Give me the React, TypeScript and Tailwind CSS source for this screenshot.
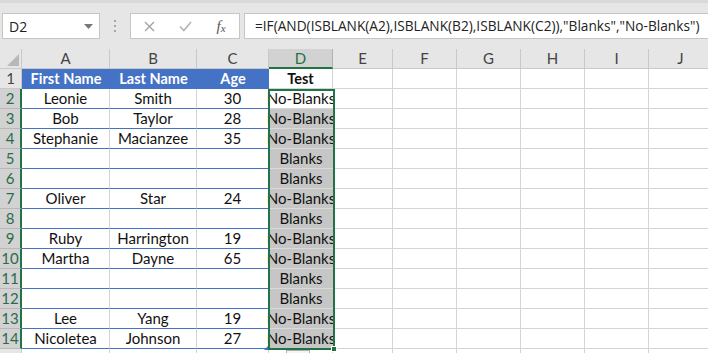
import React from "react";

const cols = ["A", "B", "C", "D", "E", "F", "G", "H", "I", "J"];

type Row = [string, string, string, string];
const data: Row[] = [
  ["Leonie", "Smith", "30", "No-Blanks"],
  ["Bob", "Taylor", "28", "No-Blanks"],
  ["Stephanie", "Macianzee", "35", "No-Blanks"],
  ["", "", "", "Blanks"],
  ["", "", "", "Blanks"],
  ["Oliver", "Star", "24", "No-Blanks"],
  ["", "", "", "Blanks"],
  ["Ruby", "Harrington", "19", "No-Blanks"],
  ["Martha", "Dayne", "65", "No-Blanks"],
  ["", "", "", "Blanks"],
  ["", "", "", "Blanks"],
  ["Lee", "Yang", "19", "No-Blanks"],
  ["Nicoletea", "Johnson", "27", "No-Blanks"],
];

const gridCols =
  "grid grid-cols-[22px_88px_87px_72px_64px_60px_64px_64px_64px_64px_64px]";

function CornerCell() {
  return (
    <div className="h-[20px] bg-[#e6e6e6] border-r border-b border-[#c9c9c9] flex items-end justify-end pr-[2px] pb-[2px]">
      <svg width="12" height="12" viewBox="0 0 12 12">
        <polygon points="12,0 12,12 0,12" fill="#b8b8b8" />
      </svg>
    </div>
  );
}

export default function App() {
  return (
    <div className="w-[708px] h-[353px] overflow-hidden bg-[#e6e6e6] font-['Lato',sans-serif] text-[#222]">
      {/* Formula bar */}
      <div className="h-[49px] border-t-[3px] border-[#d9d9d9] flex items-start pt-[10px] pl-[2px]">
        <div className="w-[101px] h-[26px] bg-white border border-[#c6c6c6] flex items-center justify-between pl-[6px] pr-[6px] font-['Open_Sans',sans-serif] text-[14px] text-[#222]">
          <span>D2</span>
          <svg width="9" height="5" viewBox="0 0 9 5">
            <polygon points="0,0 9,0 4.5,5" fill="#777" />
          </svg>
        </div>
        <div className="w-[31px] h-[26px] flex flex-col items-center justify-center gap-[3px]">
          <div className="w-[2px] h-[2px] bg-[#a8a8a8]" />
          <div className="w-[2px] h-[2px] bg-[#a8a8a8]" />
          <div className="w-[2px] h-[2px] bg-[#a8a8a8]" />
        </div>
        <div className="w-[110px] h-[26px] bg-white border border-[#c6c6c6] flex items-center">
          <div className="w-[36px] flex justify-center ml-[1px]">
            <svg width="11" height="11" viewBox="0 0 11 11">
              <path d="M1 1 L10 10 M10 1 L1 10" stroke="#a0a0a0" strokeWidth="1.3" />
            </svg>
          </div>
          <div className="w-[36px] flex justify-center">
            <svg width="13" height="11" viewBox="0 0 13 11">
              <path d="M1 5.5 L4.8 9.5 L12 1" stroke="#b4b4b4" strokeWidth="1.6" fill="none" />
            </svg>
          </div>
          <div className="w-[36px] flex justify-center font-['Liberation_Serif',serif] italic text-[15px] text-[#555] leading-none">
            <span>f</span>
            <span className="text-[11px] mt-[4px]">x</span>
          </div>
        </div>
        <div className="ml-[4px] w-[480px] h-[26px] bg-white border border-[#c6c6c6] border-r-0 flex items-center pl-[10px] font-['Open_Sans',sans-serif] text-[13.7px] text-[#222] whitespace-nowrap">
          =IF(AND(ISBLANK(A2),ISBLANK(B2),ISBLANK(C2)),"Blanks","No-Blanks")
        </div>
      </div>

      {/* Grid */}
      <div className="relative bg-white">
        {/* column headers */}
        <div className={gridCols}>
          <CornerCell />
          {cols.map((c) => (
            <div
              key={c}
              className={
                c === "D"
                  ? "h-[20px] bg-[#d2d2d2] border-r border-[#b0b0b0] border-b-2 border-b-[#217346] flex items-center justify-center text-[15px] text-[#217346]"
                  : "h-[20px] bg-[#e6e6e6] border-r border-b border-[#c9c9c9] flex items-center justify-center text-[15px] text-[#444]"
              }
            >
              {c}
            </div>
          ))}
        </div>

        {/* Row 1 */}
        <div className={gridCols}>
          <div className="h-[20px] bg-[#e6e6e6] border-r border-b border-[#c9c9c9] flex items-center justify-center text-[15px] text-[#444]">
            1
          </div>
          {["First Name", "Last Name", "Age"].map((t) => (
            <div
              key={t}
              className="h-[20px] bg-[#4472c4] flex items-center justify-center text-[14.5px] font-bold text-white whitespace-nowrap"
            >
              {t}
            </div>
          ))}
          <div className="h-[20px] bg-white border-r border-b border-[#d4d4d4] flex items-center justify-center text-[14.5px] font-bold text-[#111]">
            Test
          </div>
          {cols.slice(4).map((c) => (
            <div key={c} className="h-[20px] border-r border-b border-[#d4d4d4]" />
          ))}
        </div>

        {/* Data rows */}
        {data.map((r, i) => (
          <div key={i} className={gridCols}>
            <div className="h-[20px] bg-[#d2d2d2] border-r-2 border-r-[#217346] border-b border-b-[#b8b8b8] flex items-center justify-center text-[15px] text-[#2a6b4c]">
              {i + 2}
            </div>
            {r.slice(0, 3).map((v, j) => (
              <div
                key={j}
                className="h-[20px] border-r border-[#d4d4d4] border-b border-b-[#4472c4] flex items-center justify-center text-[15px] text-[#111] whitespace-nowrap"
              >
                {v}
              </div>
            ))}
            <div
              className={
                i === 0
                  ? "h-[20px] bg-white border-b border-[#d4d4d4] flex items-center justify-center text-[15px] text-[#111] whitespace-nowrap overflow-visible"
                  : "h-[20px] bg-[#c6c6c6] border-b border-[#dadada] flex items-center justify-center text-[15px] text-[#111] whitespace-nowrap overflow-visible"
              }
            >
              {r[3]}
            </div>
            {cols.slice(4).map((c) => (
              <div key={c} className="h-[20px] border-r border-b border-[#d4d4d4]" />
            ))}
          </div>
        ))}

        {/* Row 15 */}
        <div className={gridCols}>
          <div className="h-[20px] bg-[#e6e6e6] border-r border-[#c9c9c9]" />
          {cols.map((c) => (
            <div key={c} className="h-[20px] border-r border-[#d4d4d4]" />
          ))}
        </div>

        {/* Selection overlay D2:D14 */}
        <div className="absolute left-[268px] top-[40px] w-[67px] h-[261px] border-2 border-[#217346] pointer-events-none" />
        <div className="absolute left-[331px] top-[297px] w-[6px] h-[6px] bg-[#217346] border border-white pointer-events-none" />
        {/* table resize handle */}
        <div className="absolute left-[264px] top-[297px] w-0 h-0 border-l-[4px] border-l-transparent border-b-[4px] border-b-[#4472c4]" />
        {/* quick analysis stub */}
        <div className="absolute left-[286px] top-[301px] w-[24px] h-[12px] border border-[#b0b0b0] bg-[#f4f4f4]" />
      </div>
    </div>
  );
}
